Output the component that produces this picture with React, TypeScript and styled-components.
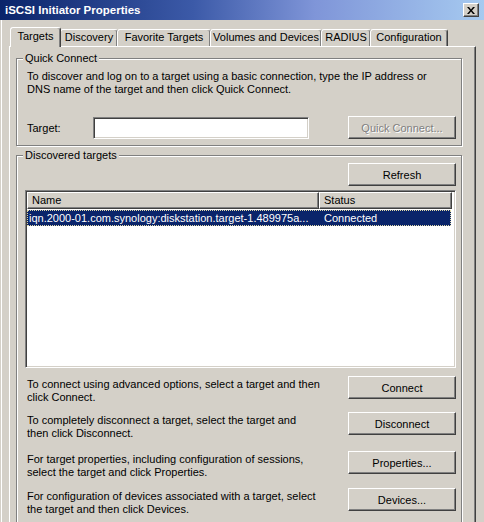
import styled, { createGlobalStyle } from "styled-components";

const GlobalStyle = createGlobalStyle`
  html, body {
    margin: 0;
    padding: 0;
    background: #d4d0c8;
  }
  body {
    font-family: "Liberation Sans", Arial, sans-serif;
    font-size: 11px;
    color: #000;
  }
`

const Window = styled.div`
  width: 484px;
  height: 522px;
  overflow: hidden;
  background: #d4d0c8;
  display: flex;
  flex-direction: column;
`

const TitleBar = styled.div`
  flex: none;
  height: 20px;
  display: flex;
  align-items: center;
  justify-content: space-between;
  padding: 0 5px 0 5px;
  background: linear-gradient(to right, #0a246a 0%, #3c5aa8 40%, #7f95d8 65%, #a6caf0 100%);
  color: #fff;
  font-weight: bold;
  font-size: 11.5px;
`

const CloseBox = styled.div`
  width: 16px;
  height: 14px;
  box-sizing: border-box;
  display: flex;
  align-items: center;
  justify-content: center;
  background: #d4d0c8;
  border: 1px solid;
  border-color: #fff #404040 #404040 #fff;
  box-shadow: inset -1px -1px #808080;
`

const Body = styled.div`
  flex: 1;
  display: flex;
  flex-direction: column;
  padding-top: 7px;
  border-left: 1px solid #d4d0c8;
  box-shadow: inset 1px 0 #fff;
  min-height: 0;
`

const TabStrip = styled.div`
  display: flex;
  align-items: flex-end;
  height: 19px;
  padding-left: 9px;
  position: relative;
  z-index: 1;
`

const Tab = styled.div<{ $w: number; $active?: boolean }>`
  box-sizing: border-box;
  width: ${p => p.$w}px;
  height: ${p => (p.$active ? 20 : 17)}px;
  margin-bottom: ${p => (p.$active ? -1 : 0)}px;
  margin-left: ${p => (p.$active ? 0 : -1)}px;
  padding-top: ${p => (p.$active ? 2 : 1)}px;
  text-align: center;
  background: #d4d0c8;
  border: 1px solid;
  border-bottom: none;
  border-color: #fff #404040 transparent #fff;
  border-radius: 3px 3px 0 0;
  box-shadow: inset -1px 0 #808080;
  line-height: 13px;
  white-space: nowrap;
  ${p => p.$active && "position: relative; z-index: 2;"}
`

const Panel = styled.div`
  box-sizing: border-box;
  margin-left: 8px;
  width: 467px;
  flex: 1;
  padding: 5px 13px 0 6px;
  border: 1px solid;
  border-color: #fff #404040 #404040 #fff;
  box-shadow: inset -1px -1px #808080;
`

const Group = styled.fieldset<{ $top?: number; $bottom?: number }>`
  margin: ${p => p.$top ?? 0}px 0 0 0;
  padding: 0 5px ${p => p.$bottom ?? 6}px 10px;
  min-width: 0;
  border: 1px solid #808080;
  box-shadow: inset 1px 1px #fff, 1px 1px #fff;
`

const Legend = styled.legend`
  padding: 0 2px;
  margin-left: -4px;
  line-height: 13px;
  background: #d4d0c8;
`

const Text = styled.div<{ $top?: number }>`
  line-height: 13px;
  padding-top: ${p => p.$top ?? 0}px;
  white-space: nowrap;
`

const TargetRow = styled.div`
  display: flex;
  align-items: center;
  margin-top: 20px;
`

const Label = styled.span`
  width: 66px;
`

const Input = styled.div`
  box-sizing: border-box;
  width: 216px;
  height: 22px;
  background: #fff;
  border: 1px solid;
  border-color: #808080 #fff #fff #808080;
  box-shadow: inset 1px 1px #404040, inset -1px -1px #d4d0c8;
`

const Button = styled.button<{ $disabled?: boolean }>`
  box-sizing: border-box;
  flex: none;
  width: 108px;
  height: 23px;
  margin: 0 0 0 auto;
  padding: 0;
  font: inherit;
  font-size: 11px;
  background: #d4d0c8;
  color: ${p => (p.$disabled ? "#808080" : "#000")};
  text-shadow: ${p => (p.$disabled ? "1px 1px #fff" : "none")};
  border: 1px solid;
  border-color: #fff #404040 #404040 #fff;
  box-shadow: inset -1px -1px #808080;
  border-radius: 0;
`

const ButtonRow = styled.div`
  display: flex;
  margin-top: 1px;
`

const List = styled.div`
  box-sizing: border-box;
  margin: 4px 0 0 -2px;
  height: 178px;
  background: #fff;
  border: 1px solid;
  border-color: #808080 #fff #fff #808080;
  box-shadow: inset 1px 1px #404040, inset -1px -1px #d4d0c8;
  padding: 1px 2px 0 1px;
`

const HeaderRow = styled.div`
  display: flex;
  height: 17px;
`

const HeaderCell = styled.div<{ $w: number }>`
  box-sizing: border-box;
  width: ${p => p.$w}px;
  padding-left: 4px;
  line-height: 15px;
  background: #d4d0c8;
  border: 1px solid;
  border-color: #fff #404040 #404040 #fff;
  box-shadow: inset -1px -1px #808080;
`

const ItemRow = styled.div<{ $selected?: boolean }>`
  display: flex;
  width: 424px;
  height: 16px;
  line-height: 16px;
  margin-top: 1px;
  background: ${p => (p.$selected ? "#0a246a" : "transparent")};
  color: ${p => (p.$selected ? "#fff" : "#000")};
  outline: ${p => (p.$selected ? "1px dotted #e0d8a8" : "none")};
  outline-offset: -1px;
`

const ItemCell = styled.div<{ $w: number; $pad: number }>`
  width: ${p => p.$w}px;
  padding-left: ${p => p.$pad}px;
  box-sizing: border-box;
  white-space: nowrap;
  overflow: hidden;
`

const ActionRow = styled.div<{ $top: number }>`
  display: flex;
  align-items: flex-start;
  margin-top: ${p => p.$top}px;
`

const tabs = [
  { label: "Targets", w: 51 },
  { label: "Discovery", w: 58 },
  { label: "Favorite Targets", w: 94 },
  { label: "Volumes and Devices", w: 112 },
  { label: "RADIUS", w: 50 },
  { label: "Configuration", w: 78 },
]

const actions = [
  { top: 8, lines: ["To connect using advanced options, select a target and then", "click Connect."], button: "Connect" },
  { top: 8, lines: ["To completely disconnect a target, select the target and", "then click Disconnect."], button: "Disconnect" },
  { top: 11, lines: ["For target properties, including configuration of sessions,", "select the target and click Properties."], button: "Properties..." },
  { top: 9, lines: ["For configuration of devices associated with a target, select", "the target and then click Devices."], button: "Devices..." },
]

export default function App() {
  return (
    <Window>
      <GlobalStyle />
      <TitleBar>
        <span>iSCSI Initiator Properties</span>
        <CloseBox>
          <svg width="8" height="7" viewBox="0 0 8 7">
            <path d="M0 0h2l2 2.5L6 0h2L5 3.5 8 7H6L4 4.5 2 7H0l3-3.5z" fill="#000" />
          </svg>
        </CloseBox>
      </TitleBar>
      <Body>
        <TabStrip>
          {tabs.map((t, i) => (
            <Tab key={t.label} $w={t.w} $active={i === 0}>{t.label}</Tab>
          ))}
        </TabStrip>
        <Panel>
          <Group>
            <Legend>Quick Connect</Legend>
            <Text $top={5}>
              To discover and log on to a target using a basic connection, type the IP address or
              <br />
              DNS name of the target and then click Quick Connect.
            </Text>
            <TargetRow>
              <Label>Target:</Label>
              <Input />
              <Button $disabled>Quick Connect...</Button>
            </TargetRow>
          </Group>
          <Group $top={3} $bottom={30}>
            <Legend>Discovered targets</Legend>
            <ButtonRow>
              <Button>Refresh</Button>
            </ButtonRow>
            <List>
              <HeaderRow>
                <HeaderCell $w={292}>Name</HeaderCell>
                <HeaderCell $w={133}>Status</HeaderCell>
              </HeaderRow>
              <ItemRow $selected>
                <ItemCell $w={292} $pad={2}>iqn.2000-01.com.synology:diskstation.target-1.489975a...</ItemCell>
                <ItemCell $w={132} $pad={5}>Connected</ItemCell>
              </ItemRow>
            </List>
            {actions.map(a => (
              <ActionRow key={a.button} $top={a.top}>
                <Text $top={2}>
                  {a.lines[0]}
                  <br />
                  {a.lines[1]}
                </Text>
                <Button>{a.button}</Button>
              </ActionRow>
            ))}
          </Group>
        </Panel>
      </Body>
    </Window>
  )
}
